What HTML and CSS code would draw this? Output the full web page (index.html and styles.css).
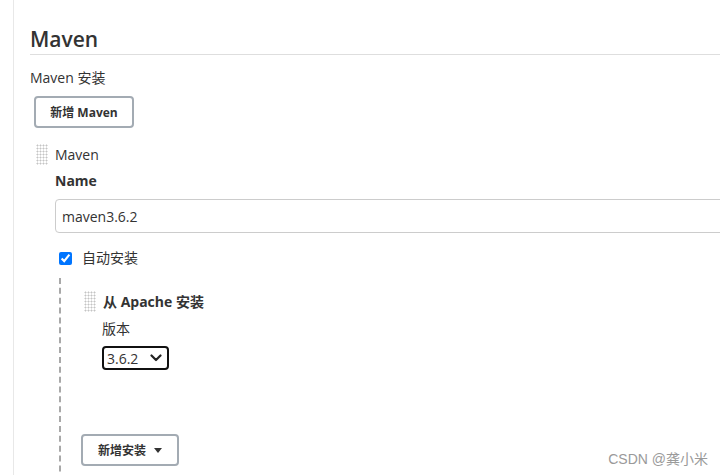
FILE: index.html
```html
<!DOCTYPE html>
<html lang="zh-CN">
<head>
<meta charset="UTF-8" />
<title>Maven - 全局工具配置</title>
<link rel="stylesheet" href="styles.css">
</head>
<body>
<div class="page">
  <h2 class="section-title">Maven</h2>

  <div class="field-label">Maven 安装</div>
  <button class="btn btn-new" type="button">新增 Maven</button>

  <div class="repeat-item">
    <div class="item-head">
      <span class="handle"></span>
      <span class="item-name">Maven</span>
    </div>

    <div class="item-body">
      <label class="bold-label" for="mavenName">Name</label>
      <input class="text-input" type="text" id="mavenName" value="maven3.6.2" />

      <label class="check-row">
        <input type="checkbox" checked />
        <span>自动安装</span>
      </label>

      <div class="installers">
        <div class="item-head installer-head">
          <span class="handle"></span>
          <span class="installer-name">从 Apache 安装</span>
        </div>
        <div class="installer-body">
          <div class="small-label">版本</div>
          <div class="select">
            <span>3.6.2</span>
            <svg width="12" height="8" viewBox="0 0 12 8"><path d="M1.5 1.5 L6 6 L10.5 1.5" fill="none" stroke="#222" stroke-width="2.2" stroke-linecap="round" stroke-linejoin="round"/></svg>
          </div>
        </div>

        <button class="btn btn-add" type="button">新增安装 <svg width="8" height="5" viewBox="0 0 8 5"><path d="M0 0 L8 0 L4 5 Z" fill="#333"/></svg></button>
      </div>
    </div>
  </div>
</div>

<div class="watermark">CSDN @龚小米</div>
</body>
</html>
```

FILE: styles.css
```css
body {
  margin: 0;
  background: #fff;
  color: #333;
  font-family: 'Open Sans', 'Noto Sans CJK SC', sans-serif;
  font-size: 14px;
  overflow: hidden;
}
.page {
  margin-left: 13px;
  padding: 25px 0 0 16px;
  height: 475px;
  box-sizing: border-box;
  overflow: hidden;
  border-left: 1px solid #e8e8e8;
}
.section-title {
  margin: 0;
  padding-bottom: 1px;
  font-size: 21px;
  font-weight: 600;
  line-height: 28px;
  color: #333;
  border-bottom: 1px solid #dedede;
}
.field-label {
  margin-top: 13px;
  line-height: 20px;
}
.btn {
  display: inline-flex;
  align-items: center;
  gap: 8px;
  height: 32px;
  padding: 0 16px;
  font-family: inherit;
  font-size: 12px;
  font-weight: 700;
  white-space: nowrap;
  color: #333;
  background: #fff;
  border: 2px solid #a3abb3;
  border-radius: 4px;
  cursor: pointer;
}
.btn-new {
  margin: 8px 0 0 4px;
  width: 100px;
  padding: 0;
  justify-content: center;
}
.repeat-item {
  margin-top: 16px;
}
.item-head {
  display: flex;
  align-items: center;
  gap: 7px;
  margin-left: 6px;
}
.handle {
  width: 12px;
  height: 21px;
  background-image: radial-gradient(circle, #c4c4c4 0.9px, transparent 1.1px);
  background-size: 3px 3px;
}
.item-name {
  line-height: 20px;
}
.item-body {
  padding-left: 25px;
}
.bold-label {
  display: block;
  margin-top: 6px;
  font-weight: 700;
  line-height: 20px;
}
.text-input {
  display: block;
  box-sizing: border-box;
  width: calc(100% + 4px);
  height: 34px;
  margin-top: 8px;
  padding: 0 6px;
  font-family: inherit;
  font-size: 14px;
  color: #333;
  border: 1px solid #ccc;
  border-radius: 4px;
}
.check-row {
  display: flex;
  align-items: center;
  gap: 10px;
  margin: 15px 0 0 4px;
  line-height: 20px;
}
.check-row input {
  margin: 0;
  width: 13px;
  height: 13px;
}
.installers {
  margin: 10px 0 0 4px;
  padding: 13px 0 10px 0;
  border-left: 2px dashed #a8a8a8;
  min-height: 200px;
}
.installer-head {
  margin-left: 23px;
  gap: 7px;
}
.installer-name {
  font-weight: 700;
  line-height: 20px;
}
.installer-body {
  padding-left: 41px;
}
.small-label {
  margin-top: 7px;
  line-height: 20px;
}
.select {
  display: inline-flex;
  align-items: center;
  gap: 12px;
  box-sizing: border-box;
  height: 24px;
  margin-top: 7px;
  padding: 0 5px 0 3px;
  border: 2px solid #111;
  border-radius: 4px;
}
.btn-add {
  margin: 64px 0 0 20px;
  padding: 0 15px;
}
.watermark {
  position: absolute;
  right: 12px;
  bottom: 7px;
  font-family: 'Liberation Sans', 'Noto Sans CJK SC', sans-serif;
  font-size: 14px;
  color: #9a9a9a;
}
```
